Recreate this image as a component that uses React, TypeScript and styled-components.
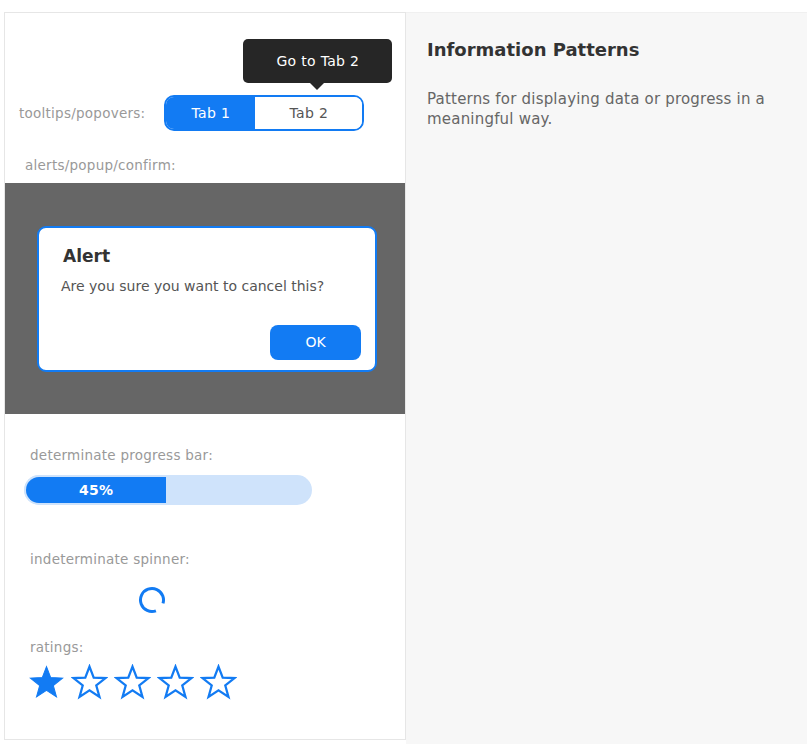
import React from 'react';
import styled, { createGlobalStyle } from 'styled-components';

const BLUE = '#127bf3';

const GlobalStyle = createGlobalStyle`
  html, body {
    margin: 0;
    padding: 0;
    background: #ffffff;
  }
  body {
    font-family: 'DejaVu Sans', 'Liberation Sans', sans-serif;
  }
  * {
    box-sizing: border-box;
  }
`;

const Page = styled.div`
  display: flex;
  align-items: stretch;
  min-height: 744px;
  padding: 12px 0 0 4px;
`;

const DemoPanel = styled.div`
  align-self: flex-start;
  width: 402px;
  height: 728px;
  border: 1px solid #e6e6e6;
  background: #ffffff;
  display: flex;
  flex-direction: column;
`;

const InfoPanel = styled.div`
  flex: 1;
  background: #f7f7f7;
  border-top: 1px solid #f0f0f0;
  padding: 26px 20px 0 21px;
`;

const InfoTitle = styled.h2`
  margin: 0;
  font-size: 18px;
  line-height: 22px;
  font-weight: bold;
  color: #333333;
`;

const InfoText = styled.p`
  margin: 28px 0 0;
  font-size: 15px;
  line-height: 20px;
  letter-spacing: 0.2px;
  color: #666666;
`;

const Label = styled.div<{ $indent: number; $top: number }>`
  margin: ${(p) => p.$top}px 0 0 ${(p) => p.$indent}px;
  font-size: 13.5px;
  line-height: 20px;
  letter-spacing: 0.25px;
  color: #999999;
`;

const TooltipRow = styled.div`
  display: flex;
  align-items: center;
  gap: 19px;
  margin-top: 82px;
  padding-left: 14px;
`;

const Tabs = styled.div`
  position: relative;
  display: flex;
  width: 200px;
  height: 36px;
  border: 2px solid ${BLUE};
  border-radius: 10px;
`;

const Tab = styled.button<{ $active?: boolean }>`
  flex: ${(p) => (p.$active ? '0 0 89px' : '1')};
  border: none;
  margin: 0;
  padding: 0;
  font-family: inherit;
  font-size: 14px;
  letter-spacing: 0.3px;
  color: ${(p) => (p.$active ? '#ffffff' : '#555555')};
  background: ${(p) => (p.$active ? BLUE : '#ffffff')};
  border-radius: ${(p) => (p.$active ? '8px 0 0 8px' : '0 8px 8px 0')};
`;

const Tooltip = styled.div`
  position: absolute;
  left: 77px;
  bottom: 46px;
  width: 149px;
  height: 44px;
  border-radius: 5px;
  background: #262626;
  color: #ffffff;
  font-size: 14px;
  letter-spacing: 0.3px;
  display: flex;
  align-items: center;
  justify-content: center;

  &::after {
    content: '';
    position: absolute;
    left: 67px;
    bottom: -7px;
    border-left: 7px solid transparent;
    border-right: 7px solid transparent;
    border-top: 7px solid #262626;
  }
`;

const Overlay = styled.div`
  margin-top: 8px;
  height: 231px;
  background: #666666;
  display: flex;
  align-items: center;
  padding-left: 32px;
`;

const Dialog = styled.div`
  width: 340px;
  height: 146px;
  background: #ffffff;
  border: 2px solid ${BLUE};
  border-radius: 9px;
  display: flex;
  flex-direction: column;
  padding: 16px 14px 10px 22px;
`;

const DialogTitle = styled.div`
  font-size: 17px;
  font-weight: bold;
  line-height: 24px;
  color: #333333;
  margin-left: 2px;
`;

const DialogMessage = styled.div`
  margin-top: 8px;
  font-size: 14px;
  line-height: 20px;
  color: #555555;
`;

const DialogActions = styled.div`
  margin-top: auto;
  display: flex;
  justify-content: flex-end;
`;

const OkButton = styled.button`
  width: 91px;
  height: 35px;
  border: none;
  border-radius: 8px;
  background: ${BLUE};
  color: #ffffff;
  font-family: inherit;
  font-size: 14px;
`;

const ProgressTrack = styled.div`
  margin: 10px 0 0 19px;
  width: 288px;
  height: 30px;
  border-radius: 15px;
  background: #cfe3fb;
  overflow: hidden;
  display: flex;
`;

const ProgressFill = styled.div`
  height: 100%;
  background: ${BLUE};
  border: 2px solid #cfe3fb;
  border-right: none;
  border-radius: 15px 0 0 15px;
  color: #ffffff;
  font-size: 14px;
  font-weight: bold;
  letter-spacing: 0.3px;
  display: flex;
  align-items: center;
  justify-content: center;
`;

const SpinnerBox = styled.div`
  margin: 17px 0 0 133px;
  width: 28px;
  height: 28px;
`;

const Stars = styled.div`
  margin: 7px 0 0 23px;
  display: flex;
  gap: 6px;
`;

const Star = ({ filled }: { filled: boolean }) => (
  <svg width="37" height="37" viewBox="0 0 36 36">
    <path
      d="M18 2.5 L22.1 13.2 L33.6 13.7 L24.6 20.9 L27.7 32 L18 25.6 L8.3 32 L11.4 20.9 L2.4 13.7 L13.9 13.2 Z"
      fill={filled ? BLUE : 'none'}
      stroke={BLUE}
      strokeWidth={filled ? 1 : 2.2}
      strokeLinejoin="miter"
    />
  </svg>
);

const Spinner = () => (
  <SpinnerBox>
    <svg width="28" height="28" viewBox="0 0 28 28">
      <circle
        cx="14"
        cy="14"
        r="11.5"
        fill="none"
        stroke={BLUE}
        strokeWidth="3"
        strokeDasharray="61.3 11"
        transform="rotate(70 14 14)"
      />
    </svg>
  </SpinnerBox>
);

const progress = 45;
const trackWidth = 316;

export default function App() {
  return (
    <>
      <GlobalStyle />
      <Page>
        <DemoPanel>
          <TooltipRow>
            <Label $indent={0} $top={0}>tooltips/popovers:</Label>
            <Tabs>
              <Tab $active>Tab 1</Tab>
              <Tab>Tab 2</Tab>
              <Tooltip>Go to Tab 2</Tooltip>
            </Tabs>
          </TooltipRow>

          <Label $indent={20} $top={24}>alerts/popup/confirm:</Label>
          <Overlay>
            <Dialog>
              <DialogTitle>Alert</DialogTitle>
              <DialogMessage>Are you sure you want to cancel this?</DialogMessage>
              <DialogActions>
                <OkButton>OK</OkButton>
              </DialogActions>
            </Dialog>
          </Overlay>

          <Label $indent={25} $top={31}>determinate progress bar:</Label>
          <ProgressTrack>
            <ProgressFill style={{ width: `${(progress / 100) * trackWidth}px` }}>
              {progress}%
            </ProgressFill>
          </ProgressTrack>

          <Label $indent={25} $top={44}>indeterminate spinner:</Label>
          <Spinner />

          <Label $indent={25} $top={23}>ratings:</Label>
          <Stars>
            {[0, 1, 2, 3, 4].map((i) => (
              <Star key={i} filled={i === 0} />
            ))}
          </Stars>
        </DemoPanel>

        <InfoPanel>
          <InfoTitle>Information Patterns</InfoTitle>
          <InfoText>
            Patterns for displaying data or progress in a meaningful way.
          </InfoText>
        </InfoPanel>
      </Page>
    </>
  );
}
